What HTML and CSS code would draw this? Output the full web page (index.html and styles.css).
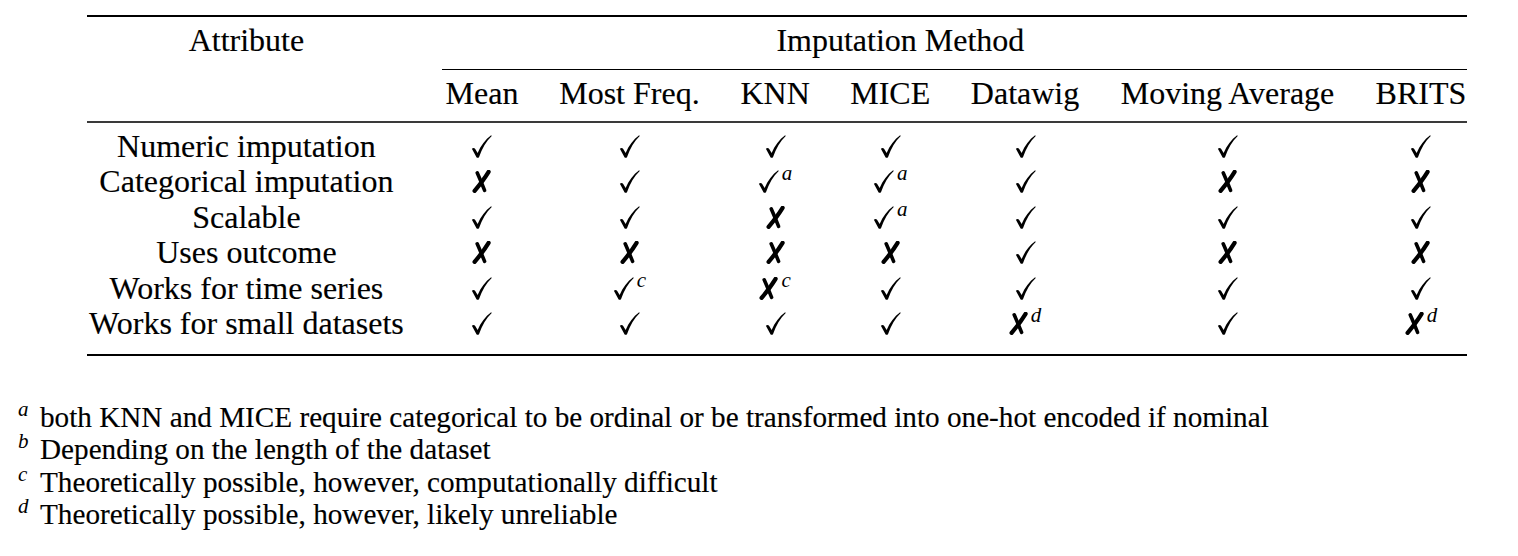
FILE: index.html
```html
<!DOCTYPE html>
<html lang="en">
<head>
<meta charset="utf-8">
<title>Imputation methods</title>
<link rel="stylesheet" href="styles.css">
</head>
<body>
<svg class="defs" width="0" height="0" aria-hidden="true">
  <defs>
    <symbol id="ck" viewBox="0 0 20 22">
      <path d="M0.8 13.2 C2 12.2 3.1 12 4 13.5 L6.3 17.2 C9.5 10 13.5 4.5 19.2 0.3 L19.8 1 C14.5 6 10.5 13 7.6 21.2 C7 22 5.6 22 5.2 21.2 Z" fill="#000"/>
    </symbol>
    <symbol id="cx" viewBox="0 0 19 23">
      <path d="M16.6 1.9 C13.2 7.5 8.4 14 2.6 20.9" fill="none" stroke="#000" stroke-width="4.2" stroke-linecap="round"/>
      <path d="M5.2 2.8 C7.6 8.2 10 14 12.6 20.4" fill="none" stroke="#000" stroke-width="3.6" stroke-linecap="round"/>
    </symbol>
  </defs>
</svg>
<table class="tbl">
  <thead>
    <tr class="h1">
      <th>Attribute</th>
      <th class="span" colspan="6">Imputation Method</th>
      <th></th>
    </tr>
    <tr class="h2">
      <th></th>
      <th class="m first">Mean</th>
      <th class="m">Most Freq.</th>
      <th class="m">KNN</th>
      <th class="m">MICE</th>
      <th class="m">Datawig</th>
      <th class="m">Moving Average</th>
      <th class="m">BRITS</th>
    </tr>
  </thead>
  <tbody>
    <tr class="r-first">
      <td>Numeric imputation</td>
      <td><svg class="ick"><use href="#ck"/></svg></td>
      <td><svg class="ick"><use href="#ck"/></svg></td>
      <td><svg class="ick"><use href="#ck"/></svg></td>
      <td><svg class="ick"><use href="#ck"/></svg></td>
      <td><svg class="ick"><use href="#ck"/></svg></td>
      <td><svg class="ick"><use href="#ck"/></svg></td>
      <td><svg class="ick"><use href="#ck"/></svg></td>
    </tr>
    <tr>
      <td>Categorical imputation</td>
      <td><svg class="icx"><use href="#cx"/></svg></td>
      <td><svg class="ick"><use href="#ck"/></svg></td>
      <td><svg class="ick"><use href="#ck"/></svg><sup class="mk">a</sup></td>
      <td><svg class="ick"><use href="#ck"/></svg><sup class="mk">a</sup></td>
      <td><svg class="ick"><use href="#ck"/></svg></td>
      <td><svg class="icx"><use href="#cx"/></svg></td>
      <td><svg class="icx"><use href="#cx"/></svg></td>
    </tr>
    <tr>
      <td>Scalable</td>
      <td><svg class="ick"><use href="#ck"/></svg></td>
      <td><svg class="ick"><use href="#ck"/></svg></td>
      <td><svg class="icx"><use href="#cx"/></svg></td>
      <td><svg class="ick"><use href="#ck"/></svg><sup class="mk">a</sup></td>
      <td><svg class="ick"><use href="#ck"/></svg></td>
      <td><svg class="ick"><use href="#ck"/></svg></td>
      <td><svg class="ick"><use href="#ck"/></svg></td>
    </tr>
    <tr>
      <td>Uses outcome</td>
      <td><svg class="icx"><use href="#cx"/></svg></td>
      <td><svg class="icx"><use href="#cx"/></svg></td>
      <td><svg class="icx"><use href="#cx"/></svg></td>
      <td><svg class="icx"><use href="#cx"/></svg></td>
      <td><svg class="ick"><use href="#ck"/></svg></td>
      <td><svg class="icx"><use href="#cx"/></svg></td>
      <td><svg class="icx"><use href="#cx"/></svg></td>
    </tr>
    <tr>
      <td>Works for time series</td>
      <td><svg class="ick"><use href="#ck"/></svg></td>
      <td><svg class="ick"><use href="#ck"/></svg><sup class="mk">c</sup></td>
      <td><svg class="icx"><use href="#cx"/></svg><sup class="mk">c</sup></td>
      <td><svg class="ick"><use href="#ck"/></svg></td>
      <td><svg class="ick"><use href="#ck"/></svg></td>
      <td><svg class="ick"><use href="#ck"/></svg></td>
      <td><svg class="ick"><use href="#ck"/></svg></td>
    </tr>
    <tr class="r-last">
      <td>Works for small datasets</td>
      <td><svg class="ick"><use href="#ck"/></svg></td>
      <td><svg class="ick"><use href="#ck"/></svg></td>
      <td><svg class="ick"><use href="#ck"/></svg></td>
      <td><svg class="ick"><use href="#ck"/></svg></td>
      <td><svg class="icx"><use href="#cx"/></svg><sup class="mk">d</sup></td>
      <td><svg class="ick"><use href="#ck"/></svg></td>
      <td><svg class="icx"><use href="#cx"/></svg><sup class="mk">d</sup></td>
    </tr>
  </tbody>
</table>
<div class="notes">
  <p class="note"><span class="nm">a</span>both KNN and MICE require categorical to be ordinal or be transformed into one-hot encoded if nominal</p>
  <p class="note"><span class="nm">b</span>Depending on the length of the dataset</p>
  <p class="note"><span class="nm">c</span>Theoretically possible, however, computationally difficult</p>
  <p class="note"><span class="nm">d</span>Theoretically possible, however, likely unreliable</p>
</div>
</body>
</html>
```

FILE: styles.css
```css
html, body {
  margin: 0;
  padding: 0;
  background: #fff;
  color: #000;
}

body {
  font-family: "Liberation Serif", "Times New Roman", serif;
}

.defs {
  position: absolute;
  width: 0;
  height: 0;
  overflow: hidden;
}

.tbl {
  margin: 15px 0 0 87px;
  width: 1380px;
  border-collapse: separate;
  border-spacing: 0;
  font-size: 32px;
  line-height: 35.5px;
  -webkit-text-stroke: 0.15px #000;
}

.tbl th,
.tbl td {
  padding: 0 19.5px;
  text-align: center;
  font-weight: normal;
  white-space: nowrap;
  vertical-align: baseline;
}

.tbl th:first-child,
.tbl td:first-child {
  padding-left: 0;
}

.tbl th:last-child,
.tbl td:last-child {
  padding-right: 0;
}

.h1 th {
  border-top: 2px solid #000;
  padding-top: 6px;
  padding-bottom: 10px;
}

.h1 th.span {
  padding-left: 39.5px;
}

.h2 th {
  padding-top: 7px;
  padding-bottom: 10px;
  border-bottom: 2px solid #3a3a3a;
}

.h2 th.m {
  background-image: linear-gradient(#000, #000);
  background-repeat: no-repeat;
  background-position: 0 0;
  background-size: 100% 1px;
}

.h2 th.m.first {
  background-position: 16.5px 0;
  background-size: calc(100% - 16.5px) 1px;
}

.r-first td {
  padding-top: 5.5px;
}

.r-last td {
  padding-bottom: 12px;
  border-bottom: 2px solid #000;
}

.ick {
  width: 21px;
  height: 23px;
  vertical-align: -1px;
}

.icx {
  width: 19px;
  height: 23px;
  vertical-align: -1px;
}

.mk {
  font-style: italic;
  font-size: 21px;
  line-height: 0;
  vertical-align: 12px;
  margin-left: 3px;
  -webkit-text-stroke: 0;
}

.notes {
  margin-top: 45px;
  font-size: 29.2px;
  line-height: 32.5px;
  -webkit-text-stroke: 0.15px #000;
}

.note {
  margin: 0;
  padding-left: 18px;
  white-space: nowrap;
}

.nm {
  display: inline-block;
  width: 22px;
  font-style: italic;
  font-size: 21px;
  line-height: 0;
  vertical-align: 11px;
  -webkit-text-stroke: 0;
}
```
